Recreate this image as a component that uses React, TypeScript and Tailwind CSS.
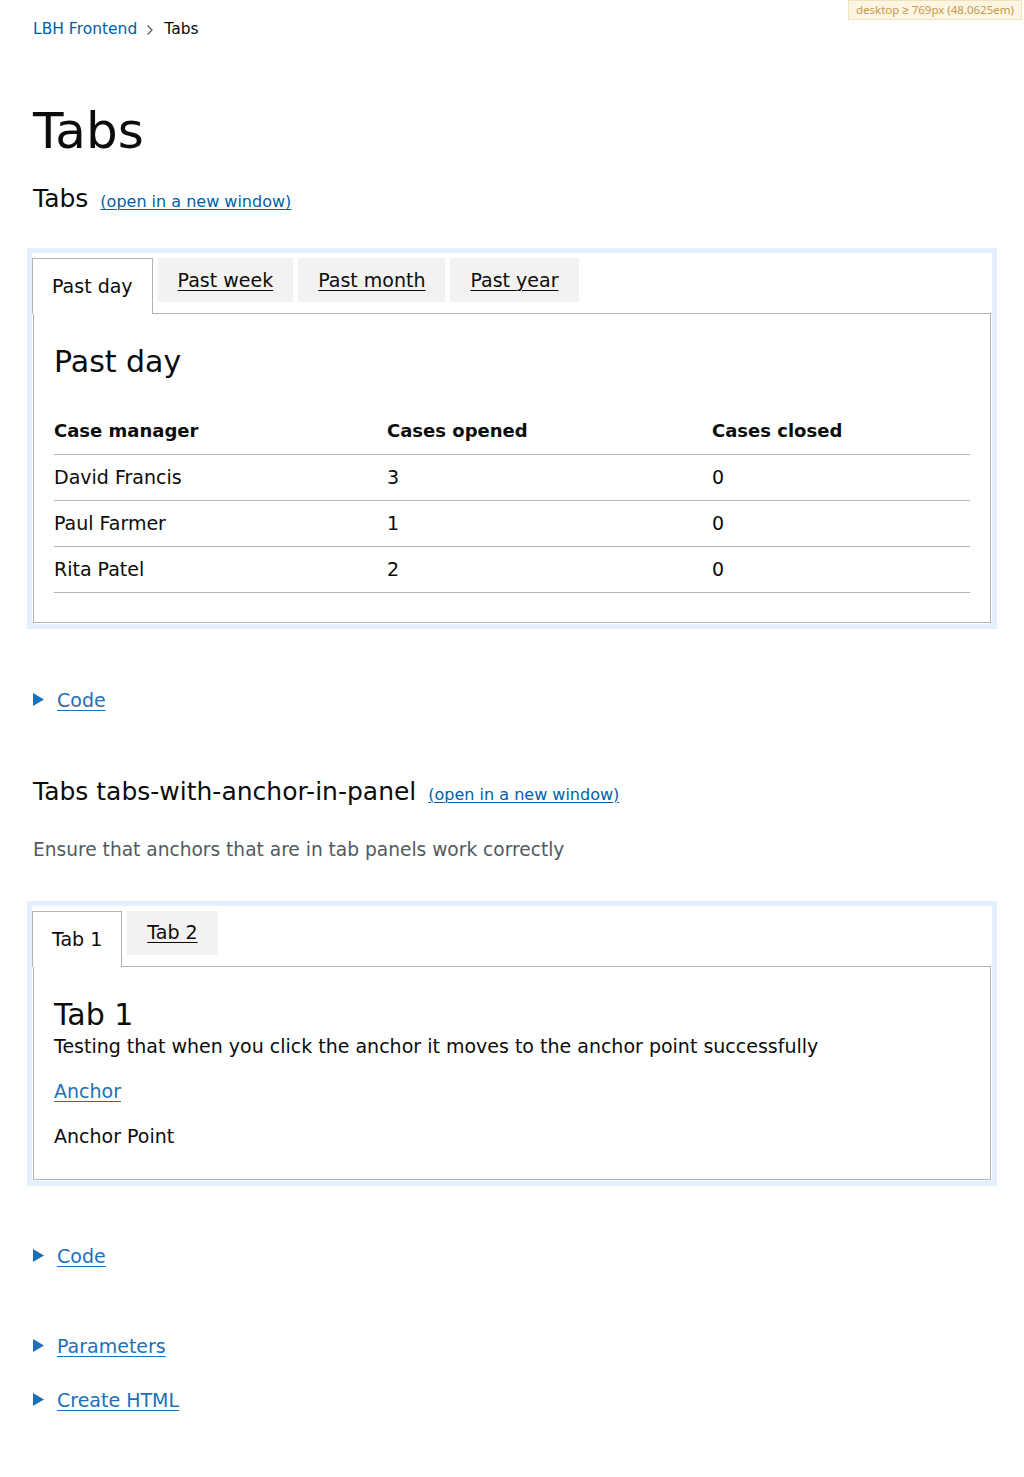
const font = { fontFamily: '"DejaVu Sans", "Noto Sans", sans-serif' };

const rows = [
  { name: 'David Francis', opened: '3', closed: '0' },
  { name: 'Paul Farmer', opened: '1', closed: '0' },
  { name: 'Rita Patel', opened: '2', closed: '0' },
];

function Summary({ label }: { label: string }) {
  return (
    <div className="flex items-center h-[28px]">
      <svg width="11" height="13" viewBox="0 0 11 13" className="mr-[13px]">
        <polygon points="0,0 11,6.5 0,13" fill="#1d70b8" />
      </svg>
      <a href="#" className="text-[19px] leading-[28px] text-[#1d70b8] underline underline-offset-[3px] decoration-1">{label}</a>
    </div>
  );
}

function TabButton({ label, selected }: { label: string; selected?: boolean }) {
  if (selected) {
    return (
      <div className="relative z-10 h-[56px] -mb-px border border-b-0 border-[#b1b4b6] bg-white px-[19px] flex items-center text-[19px] text-[#0b0c0c]">
        {label}
      </div>
    );
  }
  return (
    <a href="#" className="ml-[5px] h-[44px] bg-[#f3f2f1] px-[20px] flex items-center text-[19px] text-[#0b0c0c] underline underline-offset-[3px] decoration-1">
      {label}
    </a>
  );
}

function ExampleTitle({ title }: { title: string }) {
  return (
    <div className="flex items-baseline gap-[12px] h-[30px]">
      <h2 className="text-[25px] leading-[30px] text-[#0b0c0c]">{title}</h2>
      <a href="#" className="text-[16px] leading-[30px] text-[#025ea6] underline underline-offset-[2px] decoration-1">(open in a new window)</a>
    </div>
  );
}

export default function App() {
  return (
    <div className="relative min-h-[1477px] bg-white text-[#0b0c0c]" style={font}>
      <div className="absolute top-0 right-[2px] h-[20px] px-[7px] bg-[#fcf5e2] border border-[#f2e3bf] text-[11.5px] leading-[18px] text-[#c49a4d]" style={{ fontFamily: '"Noto Sans", sans-serif' }}>
        desktop ≥ 769px (48.0625em)
      </div>

      <div className="px-[33px] pt-[21px]">
        <nav className="flex items-center h-[18px] text-[15.5px]">
          <a href="#" className="text-[#025ea6]">LBH Frontend</a>
          <svg width="8" height="12" viewBox="0 0 8 12" className="ml-[9px] mr-[10px]">
            <polyline points="1.5,1.5 6,6 1.5,10.5" fill="none" stroke="#505a5f" strokeWidth="1.2" />
          </svg>
          <span className="text-[#0b0c0c]">Tabs</span>
        </nav>

        <h1 className="mt-[65px] text-[50px] leading-[54px]">Tabs</h1>

        <div className="mt-[26px]">
          <ExampleTitle title="Tabs" />
        </div>

        <div className="mt-[34px] -mx-[6px] border-[5px] border-[#e3f0fd] pt-[5px] pr-[1px] pb-[1px]">
          <div className="flex items-start">
            <TabButton label="Past day" selected />
            <TabButton label="Past week" />
            <TabButton label="Past month" />
            <TabButton label="Past year" />
          </div>
          <div className="border border-[#b1b4b6] px-[20px] pt-[30px] pb-[29px] ml-px">
            <h2 className="text-[30px] leading-[36px]">Past day</h2>
            <table className="mt-[28px] w-full text-[19px] border-collapse">
              <thead>
                <tr className="border-b border-[#b1b4b6]">
                  <th className="h-[46px] text-left text-[18px] font-bold w-[333px]">Case manager</th>
                  <th className="h-[46px] text-left text-[18px] font-bold w-[325px]">Cases opened</th>
                  <th className="h-[46px] text-left text-[18px] font-bold">Cases closed</th>
                </tr>
              </thead>
              <tbody>
                {rows.map(r => (
                  <tr key={r.name} className="border-b border-[#b1b4b6]">
                    <td className="h-[46px]">{r.name}</td>
                    <td className="h-[46px]">{r.opened}</td>
                    <td className="h-[46px]">{r.closed}</td>
                  </tr>
                ))}
              </tbody>
            </table>
          </div>
        </div>

        <div className="mt-[57px]">
          <Summary label="Code" />
        </div>

        <div className="mt-[63px]">
          <ExampleTitle title="Tabs tabs-with-anchor-in-panel" />
        </div>
        <p className="mt-[30px] text-[18.6px] leading-[26px] text-[#505a5f]">Ensure that anchors that are in tab panels work correctly</p>

        <div className="mt-[38px] -mx-[6px] border-[5px] border-[#e3f0fd] pt-[5px] pr-[1px] pb-[1px]">
          <div className="flex items-start">
            <TabButton label="Tab 1" selected />
            <TabButton label="Tab 2" />
          </div>
          <div className="border border-[#b1b4b6] px-[20px] pt-[30px] pb-[30px] ml-px">
            <h2 className="text-[30px] leading-[36px]">Tab 1</h2>
            <p className="text-[19px] leading-[26px]">Testing that when you click the anchor it moves to the anchor point successfully</p>
            <a href="#" className="block mt-[19px] text-[19px] leading-[26px] text-[#1d70b8] underline underline-offset-[3px] decoration-1">Anchor</a>
            <p className="mt-[19px] text-[19px] leading-[26px]">Anchor Point</p>
          </div>
        </div>

        <div className="mt-[56px]">
          <Summary label="Code" />
        </div>
        <div className="mt-[62px]">
          <Summary label="Parameters" />
        </div>
        <div className="mt-[26px]">
          <Summary label="Create HTML" />
        </div>
      </div>
    </div>
  );
}
